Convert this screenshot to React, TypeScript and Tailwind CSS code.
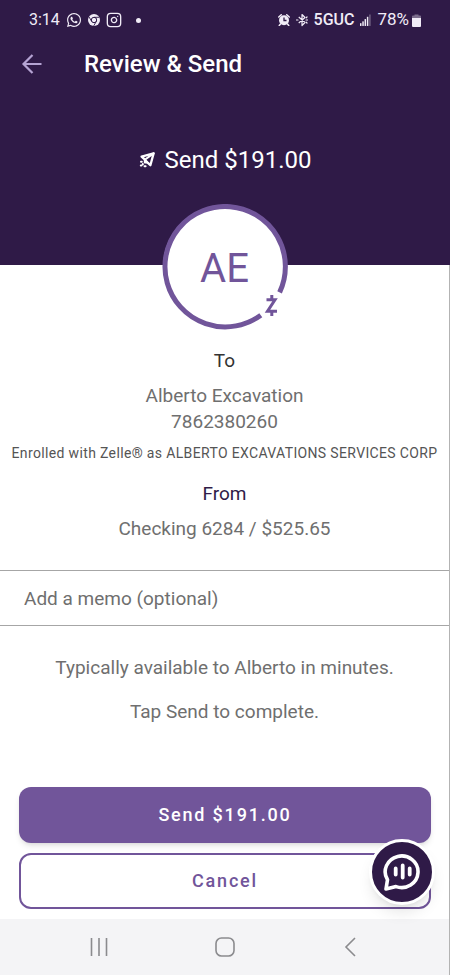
import { Instagram } from 'lucide-react';
import { FaWhatsapp } from 'react-icons/fa';

function ChromeIcon() {
  return (
    <svg viewBox="0 0 24 24" className="h-3 w-3" aria-hidden="true">
      <circle cx="12" cy="12" r="12" fill="#f1ecf7" />
      <circle cx="12" cy="12" r="5.4" fill="#f1ecf7" stroke="#2f1a47" strokeWidth="2" />
      <path d="M12 6.6H22.5M7.3 14.7L2 5.8M16.7 14.7L11.4 23.8" stroke="#2f1a47" strokeWidth="1.8" />
    </svg>
  );
}

function AlarmIcon() {
  return (
    <svg viewBox="0 0 24 24" className="h-3 w-3" aria-hidden="true">
      <circle cx="12" cy="12.5" r="10" fill="#f1ecf7" />
      <path d="M1.5 6L6.5 1.5M22.5 6L17.5 1.5M5 20L2.5 23M19 20L21.5 23" stroke="#f1ecf7" strokeWidth="3" strokeLinecap="round" />
      <path d="M12 7V13H17" fill="none" stroke="#2f1a47" strokeWidth="2.6" />
    </svg>
  );
}

function BluetoothIcon() {
  return (
    <svg viewBox="0 0 24 28" className="h-3.5 w-3" fill="none" stroke="#f1ecf7" strokeWidth="2.4" strokeLinejoin="round" aria-hidden="true">
      <path d="M5.5 8L18 19L12 25V3L18 9L5.5 20" />
      <path d="M0.8 14H4M20 14H23.2M20.5 9.5L22 8M20.5 18.5L22 20" strokeLinecap="round" />
    </svg>
  );
}

function SignalIcon() {
  return (
    <svg viewBox="0 0 12 13" className="h-3.5 w-[11px]" fill="#f1ecf7" aria-hidden="true">
      <rect x="0" y="10" width="1.6" height="3" />
      <rect x="2.5" y="8" width="1.6" height="5" />
      <rect x="5" y="5.5" width="1.6" height="7.5" />
      <rect x="7.5" y="3" width="1.6" height="10" />
      <rect x="10" y="0.5" width="1.6" height="12.5" opacity="0.35" />
    </svg>
  );
}

function BatteryIcon() {
  return (
    <svg viewBox="0 0 9 13" className="h-[13px] w-[9px]" fill="#f1ecf7" aria-hidden="true">
      <path d="M2.5 1.5V0.6H6.5V1.5H8Q9 1.5 9 2.5V5H0V2.5Q0 1.5 1 1.5Z" opacity="0.4" />
      <path d="M0 4H9V12Q9 13 8 13H1Q0 13 0 12Z" />
    </svg>
  );
}

function BackArrowIcon() {
  return (
    <svg viewBox="0 0 24 24" className="h-6 w-6" fill="none" stroke="currentColor" strokeWidth="2.2" aria-hidden="true">
      <path d="M21.5 12H4M12.5 3L3.5 12L12.5 21" />
    </svg>
  );
}

function PaperPlaneIcon() {
  return (
    <svg viewBox="0 0 16 16" className="h-4 w-4" fill="none" stroke="#ffffff" strokeWidth="2.3" strokeLinejoin="round" strokeLinecap="round" aria-hidden="true">
      <path d="M14.6 1.4L2.6 4.6L5.4 7.2L8.6 10.6L11.4 13.2Z" />
      <path d="M14.6 1.4L5.8 7.8V10.6L8.4 10.6" strokeWidth="2" />
      <path d="M2 9.8H2.8M1.8 13.4H2.4M3.8 12V12.4M5.6 14.2H6.6" strokeWidth="2" />
    </svg>
  );
}

function AvatarRing() {
  return (
    <svg viewBox="0 0 126 126" className="absolute inset-0 h-full w-full" aria-hidden="true">
      <circle cx="63" cy="63" r="62" fill="#ffffff" />
      <path d="M98.8 111.2A60.2 60.2 0 1 1 117.6 88.4" fill="none" stroke="#71559a" strokeWidth="5" />
      <g fill="none" stroke="#71559a" strokeWidth="3">
        <path d="M104.5 95.8H113L105.5 107.2H115" strokeLinejoin="miter" />
        <path d="M109.8 91V96M109.8 107V112" />
      </g>
    </svg>
  );
}

function ChatIcon() {
  return (
    <svg viewBox="0 0 40 40" className="h-10 w-10" fill="none" stroke="#ffffff" strokeLinecap="round" strokeLinejoin="round" aria-hidden="true">
      <path d="M4 37L5.5 27.8A16.4 15.8 0 1 1 14 34.6Z" strokeWidth="3.6" />
      <path d="M13.7 16.5V22.5M20.7 13.5V25.5M27.7 16.5V22.5" strokeWidth="3.8" />
    </svg>
  );
}

export default function App() {
  return (
    <div className="flex min-h-screen flex-col bg-white font-['Roboto',sans-serif] text-[#6f6f6f]">
      <header className="bg-[#2f1a47] pb-[89px] text-white">
        <div className="flex h-10 items-center justify-between px-[29px] text-[#f1ecf7]">
          <div className="flex items-center gap-1.5">
            <span className="text-base">3:14</span>
            <FaWhatsapp className="h-4 w-4" />
            <ChromeIcon />
            <Instagram className="h-4 w-4" />
            <span className="ml-2 h-[5px] w-[5px] rounded-full bg-[#f1ecf7]" />
          </div>
          <div className="flex items-center gap-1.5">
            <AlarmIcon />
            <BluetoothIcon />
            <span className="text-base font-medium">5GUC</span>
            <SignalIcon />
            <span className="flex items-center gap-[3px] text-[17px]">
              78%
              <BatteryIcon />
            </span>
          </div>
        </div>
        <div className="flex h-12 items-center pl-5">
          <button type="button" aria-label="Back" className="text-[#b5a3d3]">
            <BackArrowIcon />
          </button>
          <h1 className="ml-10 text-2xl font-medium">Review &amp; Send</h1>
        </div>
        <div className="mt-14 flex items-center justify-center gap-2.5">
          <PaperPlaneIcon />
          <p className="text-2xl leading-8">Send $191.00</p>
        </div>
      </header>

      <main className="flex grow flex-col border-r border-[#b3b3b3] text-center text-[19px] leading-[26px]">
        <div className="relative mx-auto -mt-[61px] flex h-[126px] w-[126px] items-center justify-center pt-1">
          <AvatarRing />
          <span className="relative text-[40px] text-[#71559a]">AE</span>
        </div>

        <h2 className="mt-[18px] leading-[26px] text-[#333333]">To</h2>
        <p className="mt-[9px]">Alberto Excavation</p>
        <p>7862380260</p>
        <p className="mt-2 text-sm leading-5 tracking-wide whitespace-nowrap text-[#555555]">
          Enrolled with Zelle® as ALBERTO EXCAVATIONS SERVICES CORP
        </p>

        <h2 className="mt-[18px] leading-[26px] text-[#2f1a47]">From</h2>
        <p className="mt-[9px]">Checking 6284 / $525.65</p>

        <input
          type="text"
          aria-label="Memo"
          placeholder="Add a memo (optional)"
          className="mt-7 h-14 w-full border-y border-[#a6a6a6] px-6 outline-none placeholder:text-[#6f6f6f]"
        />

        <p className="mt-[29px]">Typically available to Alberto in minutes.</p>
        <p className="mt-[18px]">Tap Send to complete.</p>

        <div className="relative mt-[62px] flex flex-col gap-2.5 pr-[18px] pl-[19px] pb-2.5 text-lg">
          <button type="button" className="h-14 rounded-xl bg-[#71559a] font-medium tracking-widest text-white shadow-md">
            Send $191.00
          </button>
          <button type="button" className="h-14 rounded-xl border-2 border-[#71559a] font-medium tracking-widest text-[#71559a]">
            Cancel
          </button>
          <button
            type="button"
            aria-label="Open chat"
            className="absolute right-3.5 bottom-3.5 flex h-[66px] w-[66px] items-center justify-center rounded-full border-[3px] border-white bg-[#2f1a47] shadow-lg"
          >
            <ChatIcon />
          </button>
        </div>

        <nav className="mt-auto grid h-14 grid-cols-[1fr_54px_1fr] items-center bg-[#f4f4f6] text-[#8b8b8e]">
          <button type="button" aria-label="Recent apps" className="justify-self-center">
            <svg viewBox="0 0 18 18" className="h-[18px] w-[18px]" stroke="currentColor" strokeWidth="1.6">
              <path d="M1.5 0V18M9 0V18M16.5 0V18" />
            </svg>
          </button>
          <button type="button" aria-label="Home" className="justify-self-center">
            <svg viewBox="0 0 20 20" className="h-5 w-5" fill="none" stroke="currentColor" strokeWidth="1.6">
              <rect x="1" y="1" width="18" height="18" rx="5.5" />
            </svg>
          </button>
          <button type="button" aria-label="Back" className="justify-self-center">
            <svg viewBox="0 0 12 20" className="h-5 w-3" fill="none" stroke="currentColor" strokeWidth="1.6">
              <path d="M11 1L2 10L11 19" />
            </svg>
          </button>
        </nav>
      </main>
    </div>
  );
}
